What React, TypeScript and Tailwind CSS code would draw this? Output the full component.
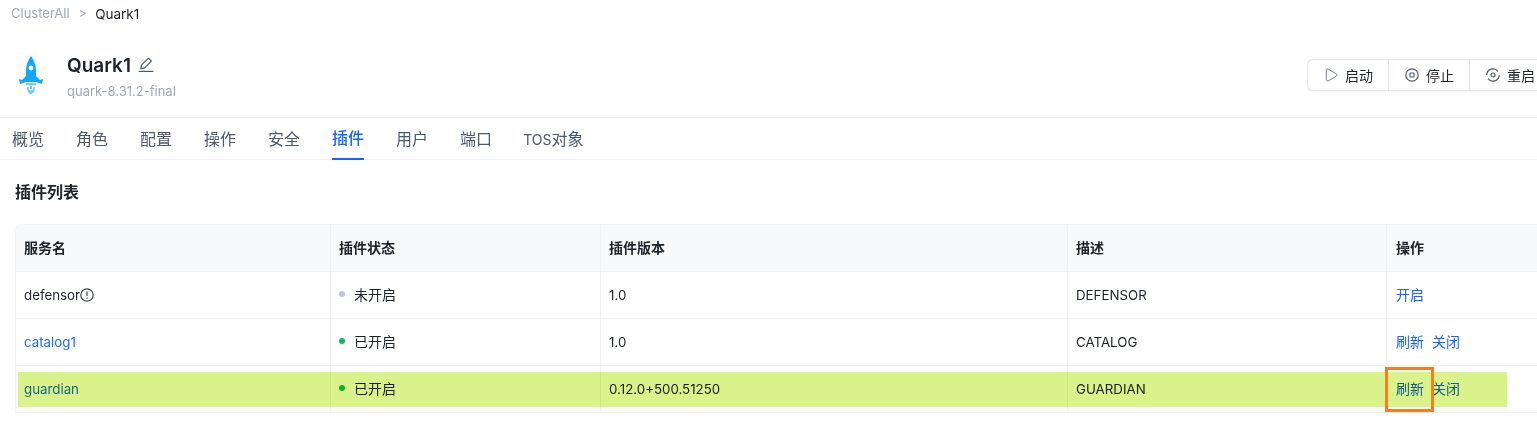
import { Play } from "lucide-react";

const rows = [
  { name: "defensor", warn: true, on: false, version: "1.0", desc: "DEFENSOR", actions: ["开启"] },
  { name: "catalog1", warn: false, on: true, version: "1.0", desc: "CATALOG", actions: ["刷新", "关闭"] },
  { name: "guardian", warn: false, on: true, version: "0.12.0+500.51250", desc: "GUARDIAN", actions: ["刷新", "关闭"] },
];

const tabs = ["概览", "角色", "配置", "操作", "安全", "插件", "用户", "端口"];

function Rocket() {
  return (
    <svg width="30" height="40" viewBox="0 0 30 40" fill="#0ea8ff">
      <path d="M15 0 C18 4 20 9 20 14 L20 20 L24 24 L27 23 L26 28 L20 26 L10 26 L4 28 L3 23 L6 24 L10 20 L10 14 C10 9 12 4 15 0 Z" />
      <circle cx="15" cy="12" r="2.4" fill="#fff" />
      <rect x="10" y="27.5" width="10" height="1.2" />
      <path d="M11 31 C11 36 13 38 15 38 C17 38 19 36 19 31 L17.4 31 C17.4 33 16.6 34.6 15 34.6 C13.4 34.6 12.6 33 12.6 31 Z" opacity="0.6" />
      <rect x="14.2" y="30" width="1.6" height="3" opacity="0.8" />
    </svg>
  );
}

function EditIcon() {
  return (
    <svg width="16" height="16" viewBox="0 0 16 16" fill="none" stroke="#4e5969" strokeWidth="1.2" className="ml-[7px] -mt-[2px]">
      <path d="M2.8 11.6 L3.4 8.2 L10.4 1.2 L13.4 4.2 L6.4 11.2 Z" strokeLinejoin="round" />
      <path d="M0.6 14.4 H15.4" />
    </svg>
  );
}

function StopIcon() {
  return (
    <svg width="16" height="16" viewBox="0 0 16 16" fill="none" stroke="#4e5969" strokeWidth="1.2">
      <circle cx="8" cy="8" r="6.2" />
      <rect x="6" y="6" width="4" height="4" rx="0.8" />
    </svg>
  );
}

function RestartIcon() {
  return (
    <svg width="16" height="16" viewBox="0 0 16 16" fill="none" stroke="#4e5969" strokeWidth="1.2">
      <path d="M1.8 8 A6.2 6.2 0 0 1 13 4.4 M14.2 8 A6.2 6.2 0 0 1 3 11.6" />
      <circle cx="8" cy="8" r="2" />
    </svg>
  );
}

function ToolButton({ icon, label }: { icon: React.ReactNode; label: string }) {
  return (
    <button className="flex h-full w-[81px] shrink-0 items-center gap-[6px] border-r border-[#e5e7eb] pl-[15px] text-[14px] text-[#1d2129]">
      {icon}
      {label}
    </button>
  );
}

export default function App() {
  return (
    <div
      className="relative h-[425px] w-[1537px] overflow-hidden bg-white text-[13.3px] text-[#1d2129]"
      style={{ fontFamily: 'Inter, "Noto Sans CJK SC", sans-serif' }}
    >
      {/* Breadcrumb */}
      <div className="flex h-[28px] items-center pl-[11px] text-[13px]">
        <span className="text-[#a3a9b8]">ClusterAll</span>
        <span className="ml-[9px] text-[#a3a9b8]">&gt;</span>
        <span className="ml-[8px] text-[13.5px] text-[#1d2129]">Quark1</span>
      </div>

      {/* Header */}
      <div className="flex h-[90px] border-b border-[#f0f1f3] pl-[16px]">
        <div className="mt-[28px]">
          <Rocket />
        </div>
        <div className="ml-[21px] mt-[24px]">
          <div className="flex items-center leading-[28px]">
            <span className="text-[19px] font-semibold text-[#1d2129]">Quark1</span>
            <EditIcon />
          </div>
          <div className="mt-[1px] text-[13px] leading-[20px] text-[#a3a9b8]">quark-8.31.2-final</div>
        </div>
        <div className="ml-auto mt-[31px] flex h-[32px] w-[230px] overflow-hidden rounded-l-[6px] border border-r-0 border-[#e5e7eb] shadow-[0_1px_2px_rgba(0,0,0,0.05)]">
          <ToolButton icon={<Play className="h-[16px] w-[16px] text-[#4e5969]" strokeWidth={1.2} />} label="启动" />
          <ToolButton icon={<StopIcon />} label="停止" />
          <ToolButton icon={<RestartIcon />} label="重启" />
        </div>
      </div>

      {/* Tabs */}
      <div className="flex h-[42px] gap-[32px] border-b border-[#f0f1f3] pl-[12px]">
        {tabs.map((tab) => (
          <div
            key={tab}
            className={
              tab === "插件"
                ? "flex h-[42px] items-center border-b-2 border-[#1664ff] text-[16px] font-medium text-[#1664ff]"
                : "flex h-[42px] items-center text-[16px] text-[#4e5969]"
            }
          >
            {tab}
          </div>
        ))}
        <div className="-ml-[1px] flex h-[42px] items-center text-[16px] text-[#4e5969]">
          <span className="text-[14px]">TOS</span>对象
        </div>
      </div>

      {/* Section */}
      <div className="pl-[15px] pt-[22px]">
        <h2 className="text-[16px] font-semibold leading-[20px] text-[#1d2129]">插件列表</h2>
        <table className="mt-[22px] w-[1540px] table-fixed border-separate border-spacing-0 overflow-hidden rounded-tl-[8px] border-l border-t border-[#f0f1f3]">
          <colgroup>
            <col className="w-[315px]" />
            <col className="w-[270px]" />
            <col className="w-[467px]" />
            <col className="w-[319px]" />
            <col />
          </colgroup>
          <thead>
            <tr className="h-[47px] bg-[#f8f9fb] text-left text-[14px]">
              {["服务名", "插件状态", "插件版本", "描述"].map((title) => (
                <th key={title} className="border-b border-r border-[#f0f1f3] pb-[1px] pl-[8px] font-semibold">
                  {title}
                </th>
              ))}
              <th className="border-b border-r border-[#f0f1f3] pb-[1px] pl-[9px] font-semibold">操作</th>
            </tr>
          </thead>
          <tbody>
            {rows.map((row) => (
              <tr key={row.name} className="h-[47px]">
                <td className="border-b border-r border-[#f0f1f3] pl-[8px] pt-[1px]">
                  {row.warn ? (
                    <span className="inline-flex items-center">
                      {row.name}
                      <svg width="14" height="14" viewBox="0 0 14 14" fill="none" stroke="#3f4654" strokeWidth="1.2" className="-mt-[2px]">
                        <circle cx="7" cy="7" r="6.2" />
                        <path d="M7 3.4 V8 M7 9.4 V10.8" />
                      </svg>
                    </span>
                  ) : (
                    <span className="text-[#1a6dff]">{row.name}</span>
                  )}
                </td>
                <td className="border-b border-r border-[#f0f1f3] pb-[2px] pl-[8px]">
                  <span className="inline-flex items-center">
                    <span className={`h-[6px] w-[6px] rounded-full ${row.on ? "bg-[#14b866]" : "bg-[#c0c6d4]"}`} />
                    <span className="ml-[9px] text-[14px]">{row.on ? "已开启" : "未开启"}</span>
                  </span>
                </td>
                <td className="border-b border-r border-[#f0f1f3] pl-[8px] pt-[1px]">{row.version}</td>
                <td className="border-b border-r border-[#f0f1f3] pl-[8px] pt-[1px]">{row.desc}</td>
                <td className="border-b border-[#f0f1f3] pb-[2px] pl-[9px]">
                  <span className="flex gap-[8px] text-[14px] text-[#1664ff]">
                    {row.actions.map((action) => (
                      <span key={action}>{action}</span>
                    ))}
                  </span>
                </td>
              </tr>
            ))}
          </tbody>
        </table>
      </div>

      {/* Screenshot annotations */}
      <div className="absolute left-[18px] top-[372px] h-[35px] w-[1489px] bg-[#d9f28a] mix-blend-multiply" />
      <div className="absolute left-[1385px] top-[367px] h-[45px] w-[49px] border-[3px] border-[#f97d1c]" />
    </div>
  );
}
